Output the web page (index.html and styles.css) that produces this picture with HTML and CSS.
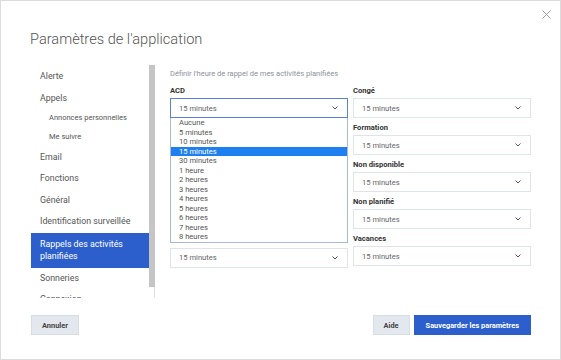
FILE: index.html
```html
<!DOCTYPE html>
<html lang="fr">
<head>
  <meta charset="UTF-8" />
  <title>Paramètres de l'application</title>
  <link rel="stylesheet" href="styles.css">
</head>
<body>

  <div class="dialog">
    <button class="close" aria-label="Fermer">
      <svg width="9" height="9" viewBox="0 0 9 9"><path d="M0.5 0.5 L8.5 8.5 M8.5 0.5 L0.5 8.5" stroke="#9b9b9b" stroke-width="1" fill="none"/></svg>
    </button>

    <div class="title">Paramètres de l'application</div>

    <div class="main">
      <div class="nav">
        <div class="nav-item">Alerte</div>
        <div class="nav-item">Appels</div>
        <div class="nav-item sub">Annonces personnelles</div>
        <div class="nav-item sub">Me suivre</div>
        <div class="nav-item">Email</div>
        <div class="nav-item">Fonctions</div>
        <div class="nav-item">Général</div>
        <div class="nav-item">Identification surveillée</div>
        <div class="nav-item active">Rappels des activités planifiées</div>
        <div class="nav-item">Sonneries</div>
        <div class="nav-item">Connexion</div>
      </div>
      <div class="scroll"><div class="thumb"></div></div>

      <div class="content">
        <div class="intro">Définir l'heure de rappel de mes activités planifiées</div>

        <div class="fields">
          <div class="col">
            <div class="field">
              <div class="label">ACD</div>
              <div class="select focus">
                <span>15 minutes</span>
                <svg class="chev" width="6" height="4" viewBox="0 0 6 4"><path d="M0.5 0.5 L3 3 L5.5 0.5" stroke="#555" stroke-width="1" fill="none"/></svg>
              </div>
              <ul class="dropdown">
                <li>Aucune</li>
                <li>5 minutes</li>
                <li>10 minutes</li>
                <li class="on">15 minutes</li>
                <li>30 minutes</li>
                <li>1 heure</li>
                <li>2 heures</li>
                <li>3 heures</li>
                <li>4 heures</li>
                <li>5 heures</li>
                <li>6 heures</li>
                <li>7 heures</li>
                <li>8 heures</li>
              </ul>
            </div>
            <div class="field">
              <div class="select"><span>15 minutes</span><svg class="chev" width="6" height="4" viewBox="0 0 6 4"><path d="M0.5 0.5 L3 3 L5.5 0.5" stroke="#555" stroke-width="1" fill="none"/></svg></div>
            </div>
          </div>

          <div class="col">
            <div class="field">
              <div class="label">Congé</div>
              <div class="select"><span>15 minutes</span><svg class="chev" width="6" height="4" viewBox="0 0 6 4"><path d="M0.5 0.5 L3 3 L5.5 0.5" stroke="#555" stroke-width="1" fill="none"/></svg></div>
            </div>
            <div class="field">
              <div class="label">Formation</div>
              <div class="select"><span>15 minutes</span><svg class="chev" width="6" height="4" viewBox="0 0 6 4"><path d="M0.5 0.5 L3 3 L5.5 0.5" stroke="#555" stroke-width="1" fill="none"/></svg></div>
            </div>
            <div class="field">
              <div class="label">Non disponible</div>
              <div class="select"><span>15 minutes</span><svg class="chev" width="6" height="4" viewBox="0 0 6 4"><path d="M0.5 0.5 L3 3 L5.5 0.5" stroke="#555" stroke-width="1" fill="none"/></svg></div>
            </div>
            <div class="field">
              <div class="label">Non planifié</div>
              <div class="select"><span>15 minutes</span><svg class="chev" width="6" height="4" viewBox="0 0 6 4"><path d="M0.5 0.5 L3 3 L5.5 0.5" stroke="#555" stroke-width="1" fill="none"/></svg></div>
            </div>
            <div class="field">
              <div class="label">Vacances</div>
              <div class="select"><span>15 minutes</span><svg class="chev" width="6" height="4" viewBox="0 0 6 4"><path d="M0.5 0.5 L3 3 L5.5 0.5" stroke="#555" stroke-width="1" fill="none"/></svg></div>
            </div>
          </div>
        </div>
      </div>
    </div>

    <div class="footer">
      <button class="btn">Annuler</button>
      <div class="spacer"></div>
      <button class="btn">Aide</button>
      <button class="btn primary">Sauvegarder les paramètres</button>
    </div>
  </div>

</body>
</html>
```

FILE: styles.css
```css
body {
  margin: 0;
  font-family: Roboto, "Noto Sans", sans-serif;
  background: #fff;
  color: #555;
}

.dialog {
  position: relative;
  width: 561px;
  height: 360px;
  box-sizing: border-box;
  border: 1px solid #dcdcdc;
  padding: 0 29px;
}

.close {
  position: absolute;
  top: 9px;
  right: 9px;
  padding: 0;
  border: none;
  background: none;
  line-height: 0;
  cursor: pointer;
}

.title {
  margin-top: 28px;
  font-size: 14.6px;
  font-weight: 300;
  line-height: 20px;
  color: #555;
}

.main {
  display: flex;
  margin-top: 16px;
  height: 233px;
}

/* menu de gauche, coupé en bas comme une liste qui défile */
.nav {
  width: 118px;
  margin-left: 1px;
  padding-top: 1px;
  overflow: hidden;
  flex-shrink: 0;
}

.scroll {
  width: 6px;
  flex-shrink: 0;
  background: linear-gradient(to right, transparent 5px, #dedede 5px);
}

.thumb {
  height: 222px;
  background: #c5c5c5;
}

.nav-item {
  padding: 4px 8px 4px 9px;
  font-size: 8.8px;
  line-height: 13.5px;
  color: #555;
}

.nav-item.sub {
  padding: 4px 8px 4px 18px;
  font-size: 7.5px;
  line-height: 10.8px;
}

.nav-item.active {
  background: #2d5fcc;
  color: #fff;
  padding-top: 5px;
  padding-bottom: 5px;
  line-height: 12.5px;
}

.content {
  flex: 1;
  margin-left: 15px;
  padding-top: 4px;
}

.intro {
  font-size: 7.5px;
  line-height: 10px;
  color: #8c919a;
  margin-bottom: 7px;
}

.fields {
  display: flex;
  gap: 5px;
}

.col {
  flex: 1;
  display: flex;
  flex-direction: column;
  gap: 5px;
}

.label {
  font-size: 7.6px;
  font-weight: bold;
  line-height: 10px;
  color: #333;
  margin-bottom: 2px;
}

.select {
  height: 20px;
  box-sizing: border-box;
  border: 1px solid #dfe4eb;
  background: #fff;
  display: flex;
  align-items: center;
  padding: 0 9px 0 8px;
  font-size: 7.6px;
  color: #666;
}

.select span {
  flex: 1;
}

.select.focus {
  border-color: #5a82d4;
}

.chev {
  display: block;
}

/* liste ouverte du champ ACD */
.dropdown {
  margin: 0;
  padding: 0;
  list-style: none;
  background: #fff;
  border: 1px solid #aab9d8;
  border-top: none;
}

.dropdown li {
  padding-left: 8px;
  font-size: 7.6px;
  line-height: 9.5px;
  color: #555;
}

.dropdown li.on {
  background: #1e7ff0;
  color: #fff;
}

.footer {
  display: flex;
  gap: 4px;
  margin-top: 17px;
  padding-left: 1px;
}

.spacer {
  flex: 1;
}

.btn {
  height: 20px;
  padding: 0 10px;
  border: 1px solid #d6dde6;
  background: #e3e8ee;
  font-family: Roboto, "Noto Sans", sans-serif;
  font-size: 7.4px;
  font-weight: bold;
  color: #444;
  cursor: pointer;
}

.btn.primary {
  background: #2d5fcc;
  border-color: #2d5fcc;
  color: #fff;
  padding: 0 11px;
}
```
